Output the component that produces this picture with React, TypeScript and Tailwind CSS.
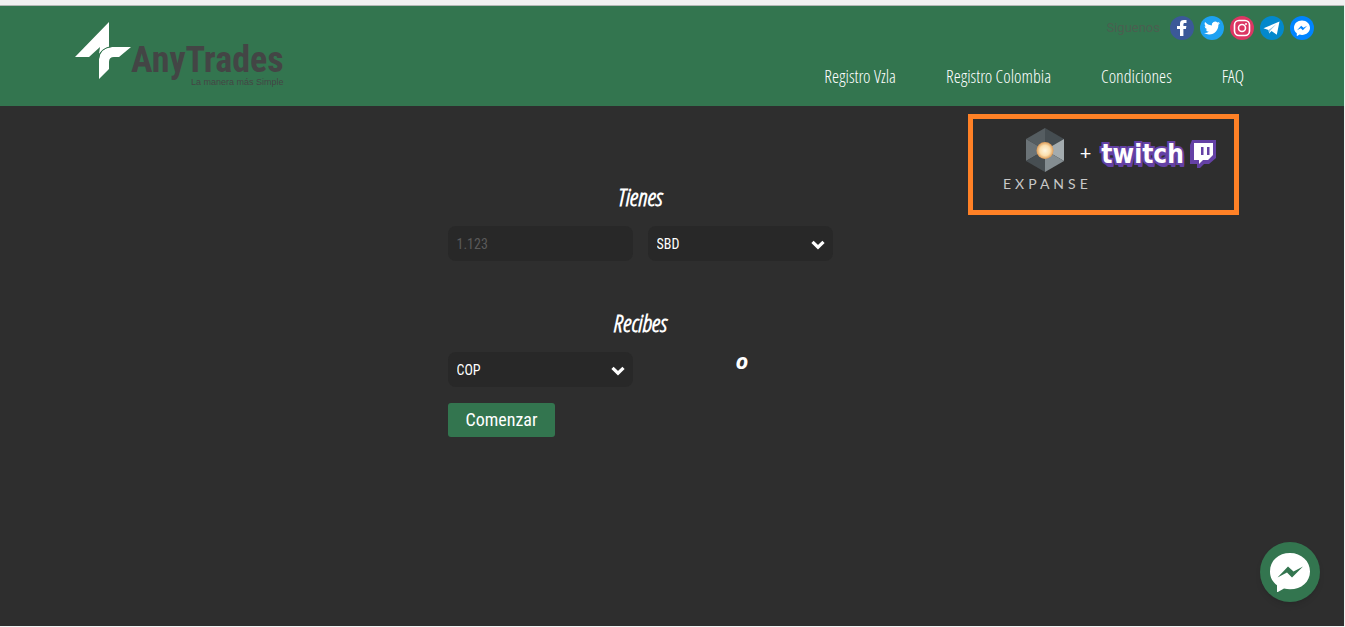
import type { ReactNode } from "react";

const CONDENSED = "font-['Open_Sans_Condensed_Light','Open_Sans_Condensed','Liberation_Sans_Narrow',sans-serif]";
const ROBOTO = "font-['Roboto_Condensed',Roboto,sans-serif]";

const navItems = ["Registro Vzla", "Registro Colombia", "Condiciones", "FAQ"];

function Logo() {
  return (
    <a href="#" className="flex items-start" aria-label="AnyTrades">
      <svg viewBox="0 0 56 58" className="h-[58px] w-14" aria-hidden="true">
        <path d="M34 0V25Q27 27 24 32L25 25 14 35H0Z" fill="#fff" />
        <path d="M24 57V37Q25 26 37 25H56L44 35H39Q34 35 34 40V47Z" fill="#fff" />
        <path d="M23.500 37Q24.500 26 37 24.500" fill="none" stroke="#33754f" strokeWidth="1" />
      </svg>
      <span className="flex flex-col items-end pt-5 text-[#434545]">
        <span className={`text-4xl leading-9 font-bold ${ROBOTO}`}>AnyTrades</span>
        <span className="font-['Liberation_Sans',sans-serif] text-[9px] leading-2">La manera más Simple</span>
      </span>
    </a>
  );
}

function MessengerGlyph({ className, bolt }: { className: string; bolt: string }) {
  return (
    <svg viewBox="0 0 40 40" className={className} aria-hidden="true">
      <path d="M20 1C8.500 1 0 8.500 0 19.500c0 6 2.700 10.500 7 13.800V40.500l7-4c2 .6 4 .8 6 .8 11.500 0 20-7.500 20-17.800S31.500 1 20 1Z" fill="#fff" />
      <path d="M7.500 25.500 18 14.500 23.500 19.500 33 14.500 22 25.500 17 20.500Z" fill={bolt} />
    </svg>
  );
}

function Social({ label, color, children }: { label: string; color: string; children: ReactNode }) {
  return (
    <a href="#" aria-label={label} className={`flex size-6 items-center justify-center rounded-full ${color}`}>
      {children}
    </a>
  );
}

function Socials() {
  return (
    <div className="flex items-center gap-1.5">
      <span className="mr-1 font-[Roboto,sans-serif] text-[13px] leading-4 text-[#4a5f50]">Siguenos</span>
      <Social label="Facebook" color="bg-[#3b5998]">
        <svg viewBox="0 0 24 24" className="size-6" fill="#fff" aria-hidden="true">
          <path d="M10 20v-7H7V10h3V7.500C10 5 11.500 4 14 4h2.500v3H15c-1.300 0-1.600.5-1.600 1.500V10h3l-.5 3h-2.500v7Z" />
        </svg>
      </Social>
      <Social label="Twitter" color="bg-[#1da1f2]">
        <svg viewBox="0 0 24 24" className="size-4" fill="#fff" aria-hidden="true">
          <path d="M23.950 4.570a10 10 0 0 1-2.820.77 4.960 4.960 0 0 0 2.160-2.720c-.95.55-2 .96-3.130 1.180a4.920 4.920 0 0 0-8.380 4.480C7.690 8.090 4.070 6.130 1.640 3.160a4.820 4.820 0 0 0-.67 2.480c0 1.710.87 3.210 2.190 4.100a4.900 4.900 0 0 1-2.230-.62v.06a4.920 4.920 0 0 0 3.950 4.830 5 5 0 0 1-2.210.08 4.940 4.940 0 0 0 4.600 3.420A9.870 9.870 0 0 1 0 19.540a13.990 13.990 0 0 0 7.550 2.210c9.050 0 14-7.500 14-13.980 0-.21 0-.42-.02-.63a9.940 9.940 0 0 0 2.460-2.550Z" />
        </svg>
      </Social>
      <Social label="Instagram" color="bg-[#dc3663]">
        <svg viewBox="0 0 24 24" className="size-6" fill="none" stroke="#fff" strokeWidth="1.600" aria-hidden="true">
          <rect x="4.500" y="4.500" width="15" height="15" rx="4.500" />
          <circle cx="12" cy="12" r="3.500" />
          <circle cx="16" cy="8" r="1" fill="#fff" stroke="none" />
        </svg>
      </Social>
      <Social label="Telegram" color="bg-[#0388cc]">
        <svg viewBox="0 0 24 24" className="size-6" aria-hidden="true">
          <path d="M3.500 12.300 19.500 5.500 16.800 18.700 11.500 15 9.200 17.600 8.500 14Z" fill="#fff" />
          <path d="M8.500 14 16.500 8 10.300 14.600 9.200 17.600Z" fill="#8cc5e4" />
        </svg>
      </Social>
      <Social label="Messenger" color="bg-[#0084ff]">
        <MessengerGlyph className="size-4" bolt="#0084ff" />
      </Social>
    </div>
  );
}

function Expanse() {
  return (
    <div className="flex flex-col items-center gap-1">
      <svg viewBox="0 0 38 44" className="h-11 w-[38px]" aria-hidden="true">
        <defs>
          <radialGradient id="core">
            <stop offset="0" stopColor="#fff6e0" />
            <stop offset="0.6" stopColor="#fbdfae" />
            <stop offset="1" stopColor="#dd9a55" />
          </radialGradient>
        </defs>
        <path d="M19 0 0 11 19 22Z" fill="#555d61" />
        <path d="M19 0 38 11 19 22Z" fill="#454d51" />
        <path d="M0 11V33L19 22Z" fill="#6b7377" />
        <path d="M38 11V33L19 22Z" fill="#a4acaf" />
        <path d="M0 33 19 44V22Z" fill="#474e52" />
        <path d="M38 33 19 44V22Z" fill="#848d91" />
        <circle cx="19" cy="22.500" r="8.500" fill="url(#core)" />
      </svg>
      <span className="pl-1 font-[Lato,sans-serif] text-sm leading-4 tracking-[4px] text-[#c8c8c8]">EXPANSE</span>
    </div>
  );
}

function Twitch() {
  return (
    <div className="flex items-start gap-1.5">
      <span className="pt-0.5 font-['DejaVu_Sans_Condensed','DejaVu_Sans',sans-serif] text-[26px] leading-6 font-bold text-white [paint-order:stroke_fill] [-webkit-text-stroke:4px_#6441a5] [text-shadow:1px_1px_0_#6441a5,1px_2px_0_#6441a5,2px_3px_0_#6441a5,2px_4px_0_#6441a5]">
        twitch
      </span>
      <svg viewBox="0 0 26 28" className="h-7 w-[26px]" aria-hidden="true">
        <path d="M2 0H26V18L19 24H14L10 28H7V24H0V5Z" fill="#6441a5" />
        <path d="M4 3H23V15L18 20H13L9 24V20H4Z" fill="#fff" />
        <path d="M11 7h2.500v8H11ZM17 7h2.500v8H17Z" fill="#6441a5" />
      </svg>
    </div>
  );
}

const field = `h-[35px] w-full appearance-none rounded-lg bg-[#282828] px-[9px] text-sm leading-5 outline-none ${ROBOTO}`;

function Select({ label, options }: { label: string; options: string[] }) {
  return (
    <div className="grid items-center">
      <select aria-label={label} className={`col-start-1 row-start-1 text-white ${field}`}>
        {options.map((option) => (
          <option key={option}>{option}</option>
        ))}
      </select>
      <svg viewBox="0 0 14 12" className="pointer-events-none col-start-1 row-start-1 mr-2 h-3 w-3.5 justify-self-end" fill="none" stroke="#fff" strokeWidth="3.200" aria-hidden="true">
        <path d="M1.500 3.800 7 9.200 12.500 3.800" />
      </svg>
    </div>
  );
}

const heading = `text-center text-2xl leading-8 font-bold text-white italic ${CONDENSED}`;

export default function App() {
  return (
    <div className="flex min-h-screen flex-col border-r border-b border-[#f1f1f1] bg-[#2e2e2e]">
      <div className="h-1.5 border-b border-[#b4b8b6] bg-[#f1f1f1]" />
      <header className="flex h-[100px] items-start justify-between bg-[#33754f] pl-[75px]">
        <div className="pt-4">
          <Logo />
        </div>
        <div className="flex flex-col items-end pt-2.5 pr-[30px]">
          <Socials />
          <nav className={`flex gap-[50px] pt-[22px] pr-[70px] text-lg leading-7 font-light text-white ${CONDENSED}`}>
            {navItems.map((item) => (
              <a key={item} href="#">
                {item}
              </a>
            ))}
          </nav>
        </div>
      </header>

      <main className="grid grow grid-cols-[1fr_385px_1fr] items-start pr-16">
        <form className="col-start-2 pt-[75px]">
          <h2 className={heading}>Tienes</h2>
          <div className="mt-[13px] grid grid-cols-2 gap-[15px]">
            <input aria-label="Cantidad" placeholder="1.123" className={`text-white placeholder:text-[#5a5a5a] ${field}`} />
            <Select label="Moneda que tienes" options={["SBD"]} />
          </div>
          <h2 className={`mt-[46px] ${heading}`}>Recibes</h2>
          <div className="mt-[13px] grid grid-cols-2 gap-[15px]">
            <Select label="Moneda que recibes" options={["COP"]} />
            <output className="pl-1 text-center font-['Open_Sans',sans-serif] text-[22px] leading-4 font-bold text-white italic">o</output>
          </div>
          <button type="button" className={`mt-4 h-[34px] rounded-[3px] bg-[#33754f] px-[18px] text-lg text-white ${ROBOTO}`}>
            Comenzar
          </button>
        </form>
        <aside className="mt-2 mr-[41px] flex h-[101px] w-[271px] items-start justify-self-end border-5 border-[#ff8126] pt-[9px] pl-[26px]">
          <Expanse />
          <div className="-ml-3 flex items-start gap-2.5 pt-3">
            <span className="font-[Lato,sans-serif] text-xl leading-6 text-white">+</span>
            <Twitch />
          </div>
        </aside>
      </main>

      <button type="button" aria-label="Messenger" className="fixed right-[25px] bottom-[25px] flex size-[60px] items-center justify-center rounded-full bg-[#33754f] shadow-md">
        <MessengerGlyph className="size-10" bolt="#33754f" />
      </button>
    </div>
  );
}
